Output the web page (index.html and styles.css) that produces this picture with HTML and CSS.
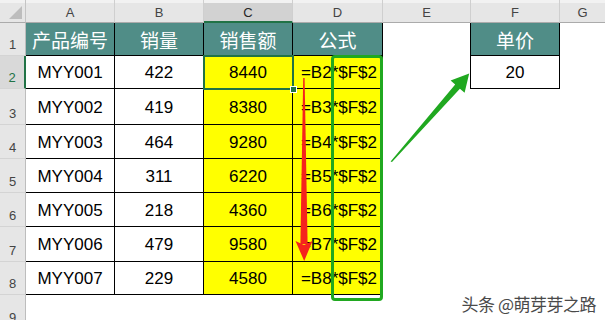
FILE: index.html
```html
<!DOCTYPE html>
<html lang="zh">
<head>
<meta charset="utf-8">
<link rel="stylesheet" href="styles.css">
</head>
<body>
<div class="sheet">
  <div class="corner"><span class="tri"></span></div>
  <div class="ch">A</div>
  <div class="ch">B</div>
  <div class="ch sel">C</div>
  <div class="ch">D</div>
  <div class="ch">E</div>
  <div class="ch">F</div>
  <div class="ch last">G</div>

  <div class="rh">1</div>
  <div class="c b th">产品编号</div>
  <div class="c b th">销量</div>
  <div class="c b th">销售额</div>
  <div class="c b th">公式</div>
  <div class="c eb"></div>
  <div class="c b th">单价</div>
  <div class="c"></div>

  <div class="rh selrow">2</div>
  <div class="c b">MYY001</div>
  <div class="c b">422</div>
  <div class="c b y">8440</div>
  <div class="c b y f">=B2*$F$2</div>
  <div class="c eb"></div>
  <div class="c b">20</div>
  <div class="c"></div>

  <div class="rh">3</div>
  <div class="c b">MYY002</div>
  <div class="c b">419</div>
  <div class="c b y">8380</div>
  <div class="c b y f">=B3*$F$2</div>
  <div class="c"></div><div class="c"></div><div class="c"></div>

  <div class="rh">4</div>
  <div class="c b">MYY003</div>
  <div class="c b">464</div>
  <div class="c b y">9280</div>
  <div class="c b y f">=B4*$F$2</div>
  <div class="c"></div><div class="c"></div><div class="c"></div>

  <div class="rh">5</div>
  <div class="c b">MYY004</div>
  <div class="c b">311</div>
  <div class="c b y">6220</div>
  <div class="c b y f">=B5*$F$2</div>
  <div class="c"></div><div class="c"></div><div class="c"></div>

  <div class="rh">6</div>
  <div class="c b">MYY005</div>
  <div class="c b">218</div>
  <div class="c b y">4360</div>
  <div class="c b y f">=B6*$F$2</div>
  <div class="c"></div><div class="c"></div><div class="c"></div>

  <div class="rh">7</div>
  <div class="c b">MYY006</div>
  <div class="c b">479</div>
  <div class="c b y">9580</div>
  <div class="c b y f">=B7*$F$2</div>
  <div class="c"></div><div class="c"></div><div class="c"></div>

  <div class="rh">8</div>
  <div class="c b">MYY007</div>
  <div class="c b">229</div>
  <div class="c b y">4580</div>
  <div class="c b y f">=B8*$F$2</div>
  <div class="c"></div><div class="c"></div><div class="c"></div>

  <div class="rh">9</div>
  <div class="c"></div><div class="c"></div><div class="c"></div><div class="c"></div><div class="c"></div><div class="c"></div><div class="c"></div>

  <div class="selection"><span class="handle"></span></div>
  <div class="greenbox"></div>
  <svg class="arrows" width="605" height="320" viewBox="0 0 605 320">
    <polygon fill="#f5231d" points="303.2,78 304.6,78 307.6,244 300.4,244"/>
    <polygon fill="#f5231d" points="295.5,241 304,245 312.5,241 304.2,261"/>
    <polygon fill="#20a820" points="390.6,161.4 455.2,84.6 450.6,80.4 469.2,73.6 464.6,92.8 459.9,88.8 392,162"/>
  </svg>
  <div class="mark">头条 @萌芽芽之路</div>
</div>
</body>
</html>
```

FILE: styles.css
```css
* { box-sizing: border-box; }
html, body { margin: 0; padding: 0; background: #fff; }
body { width: 605px; height: 320px; overflow: hidden; }

.sheet {
  position: relative;
  display: grid;
  grid-template-columns: 26px 89px 89px 89px 90px 88px 89px 1fr;
  grid-template-rows: 23px 33px 33px 36px 34px 34px 34px 35px 33px 34px;
  font-family: "Liberation Sans", Arial, sans-serif;
  color: #000;
}

.corner {
  position: relative;
  background: #e6e6e6;
  border-right: 1px solid #c4c4c4;
  border-bottom: 1px solid #ababab;
  box-shadow: inset 0 3px 0 #f2f2f2;
}
.tri {
  position: absolute;
  right: 3px;
  bottom: 3px;
  width: 0;
  height: 0;
  border-style: solid;
  border-width: 0 0 13px 13px;
  border-color: transparent transparent #bdbdbd transparent;
}

.ch {
  display: flex;
  align-items: center;
  justify-content: center;
  padding-top: 3px;
  background: #e6e6e6;
  border-right: 1px solid #cfcfcf;
  border-bottom: 1px solid #ababab;
  box-shadow: inset 0 3px 0 #f2f2f2;
  font-size: 13px;
  color: #444;
}
.ch.sel {
  background: #d2d2d2;
  border-bottom: 2px solid #217346;
  color: #262626;
}
.ch.last { border-right: none; }

.rh {
  display: flex;
  align-items: flex-end;
  justify-content: center;
  padding-bottom: 3px;
  background: #e6e6e6;
  border-right: 1px solid #bdbdbd;
  border-bottom: 1px solid #d4d4d4;
  font-size: 13px;
  color: #444;
}
.rh.selrow {
  background: #d9d9d9;
  color: #217346;
  border-right: 2px solid #217346;
}

.c {
  display: flex;
  align-items: center;
  justify-content: center;
  padding-top: 2px;
  font-size: 17px;
  white-space: nowrap;
  overflow: hidden;
}
.b {
  border-right: 1px solid #000;
  border-bottom: 1px solid #000;
}
.eb { border-right: 1px solid #000; }
.th {
  background: #508d87;
  color: #fff;
  font-family: "Noto Sans CJK SC", "Liberation Sans", sans-serif;
  font-size: 19px;
  padding-top: 0;
}
.y { background: #ffff00; }
.f {
  justify-content: flex-end;
  padding-right: 5px;
}

.selection {
  position: absolute;
  left: 203px;
  top: 55px;
  width: 91px;
  height: 35px;
  border: 2px solid #217346;
}
.handle {
  position: absolute;
  right: -5px;
  bottom: -5px;
  width: 7px;
  height: 7px;
  background: #217346;
  border: 1px solid #fff;
}

.greenbox {
  position: absolute;
  left: 331px;
  top: 55px;
  width: 52px;
  height: 246px;
  border: 3px solid #20a820;
  border-radius: 4px;
}

.arrows {
  position: absolute;
  left: 0;
  top: 0;
}

.mark {
  position: absolute;
  right: 9px;
  top: 291px;
  font-family: "Noto Sans CJK SC", sans-serif;
  font-size: 17px;
  color: #4a4a4a;
  text-shadow: 0 0 2px #fff, 0 0 2px #fff;
  letter-spacing: -0.5px;
}
```
